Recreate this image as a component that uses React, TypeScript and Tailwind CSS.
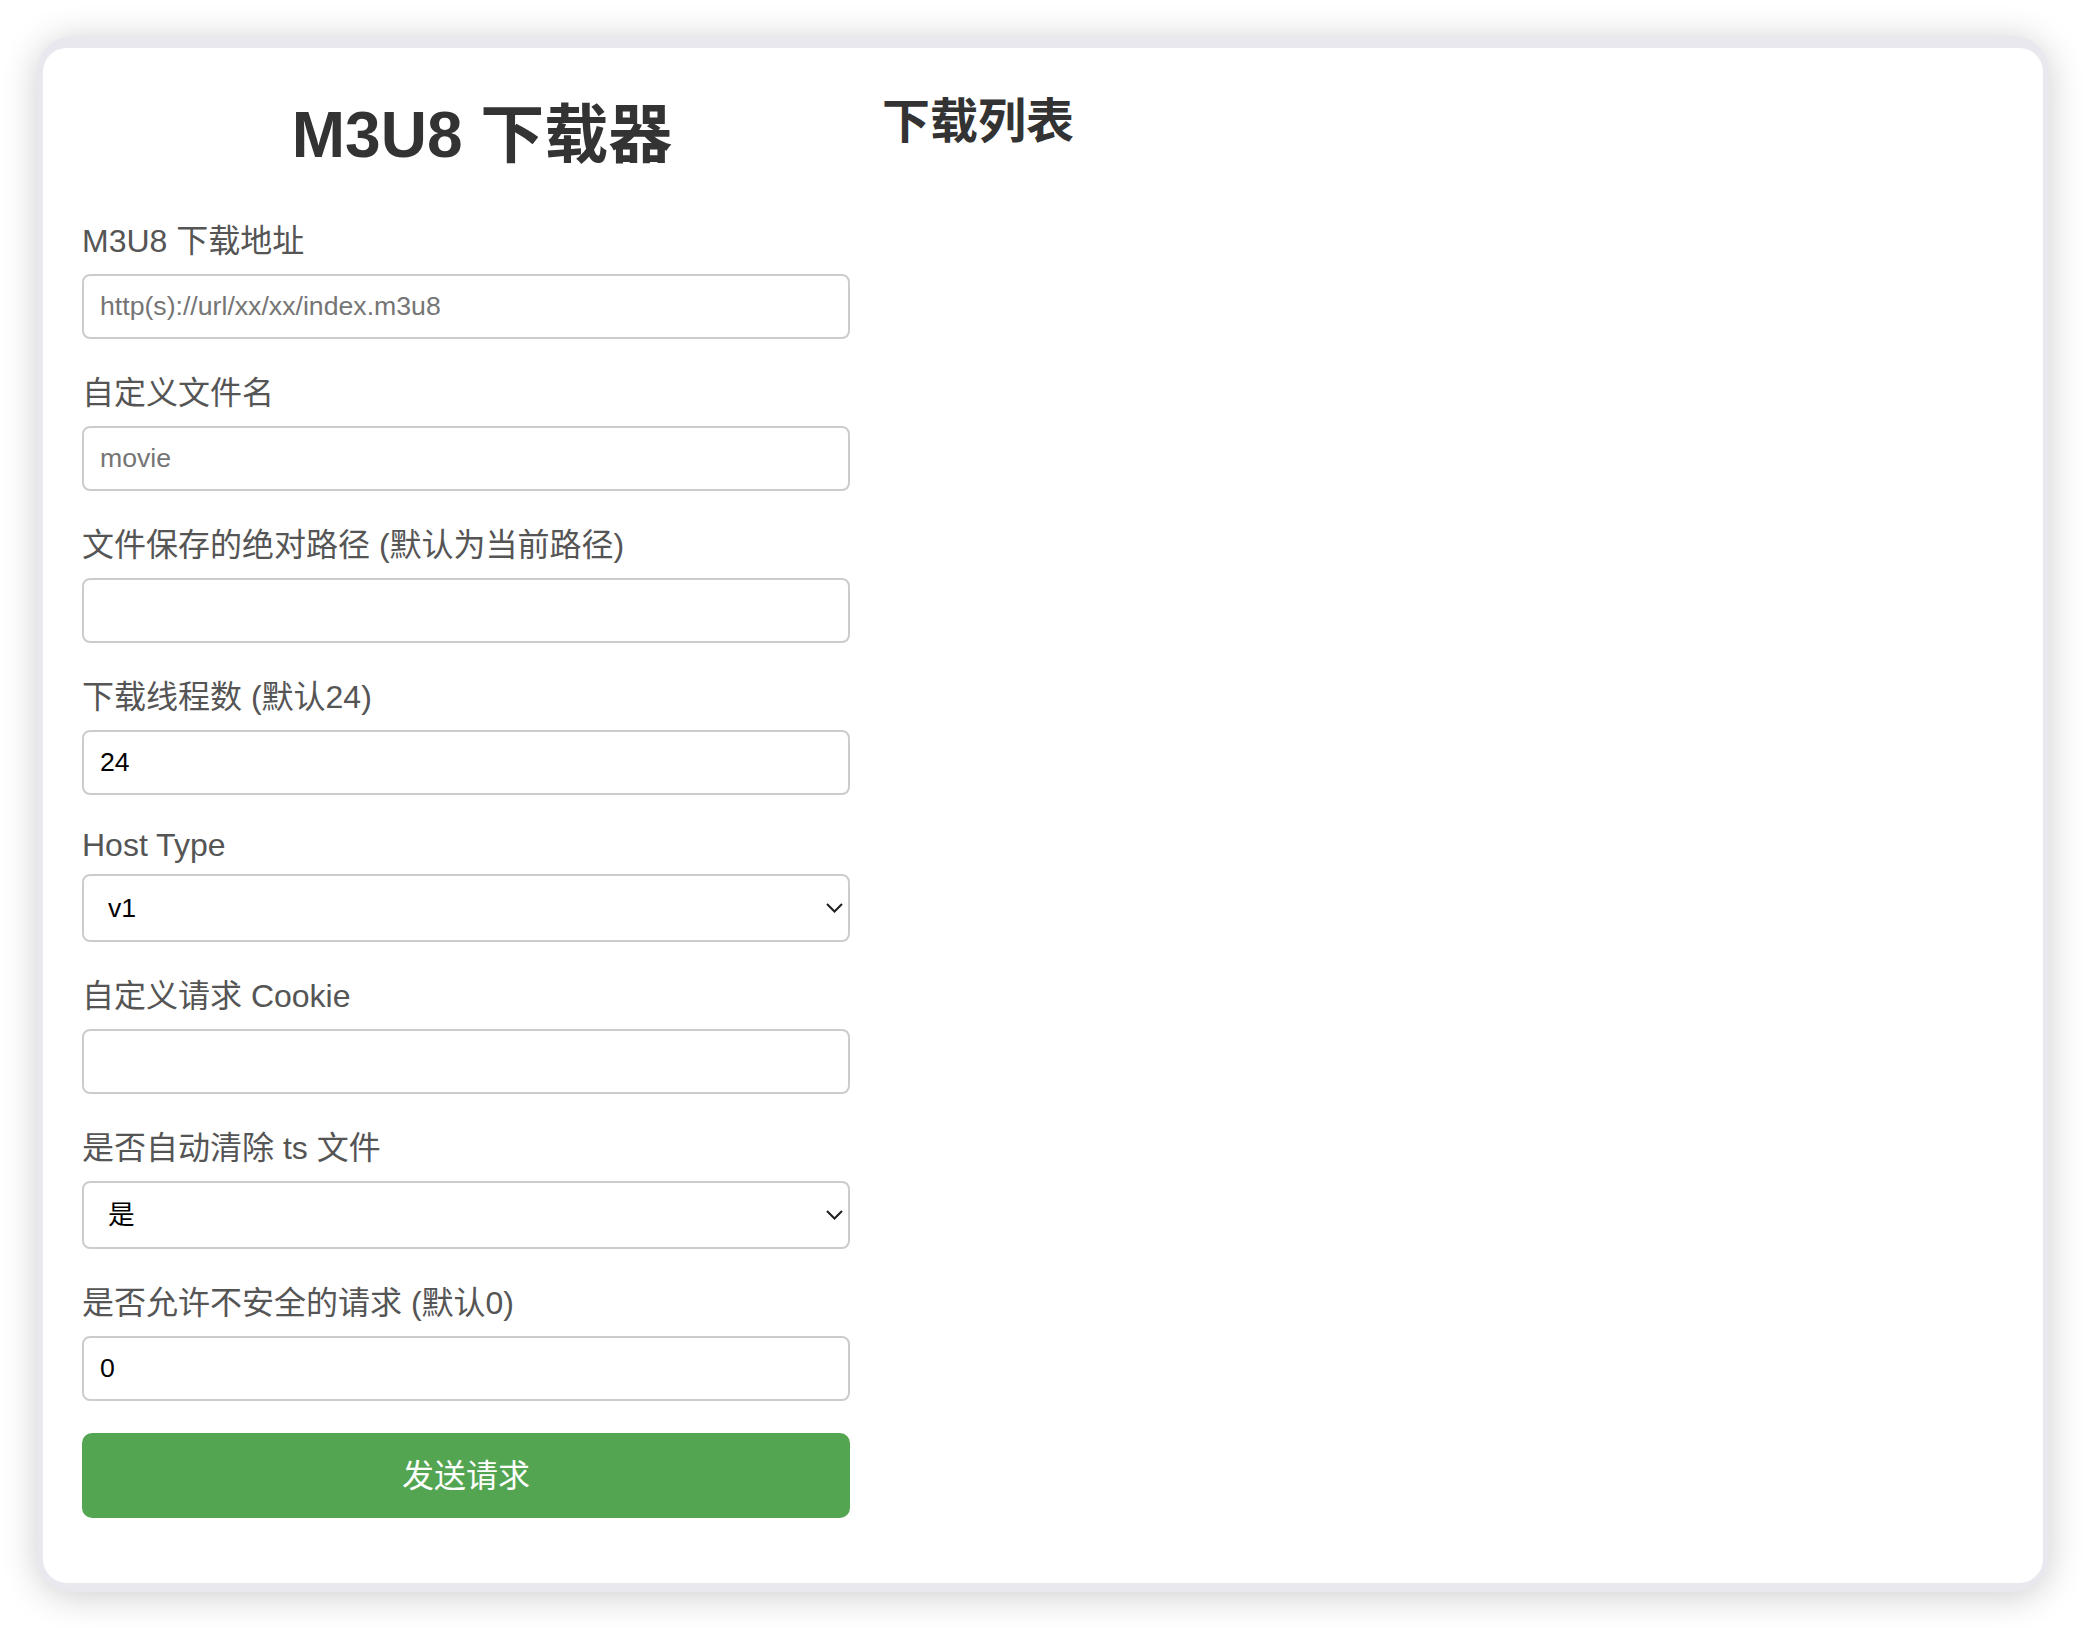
import React from "react";

const inputCls =
  "block h-[65px] w-full rounded-[8px] border-2 border-[#cccccc] bg-white px-[16px] text-[26.67px] text-black outline-none placeholder:text-[#757575]";

const selectCls =
  "block h-[68px] w-full appearance-none rounded-[8px] border-2 border-[#cccccc] bg-white pl-[24px] text-[26.67px] text-black outline-none";

const Label = ({ text, latin }: { text: string; latin?: boolean }) => (
  <label
    className={`mb-[10px] block text-[32px] text-[#555555] ${
      latin ? "leading-[37px]" : "leading-[45px]"
    }`}
  >
    {text}
  </label>
);

const Chevron = () => (
  <svg
    className="pointer-events-none absolute right-[7px] top-[29px]"
    width="17"
    height="10"
    viewBox="0 0 17 10"
    fill="none"
  >
    <polyline points="1,1 8.5,8.5 16,1" stroke="#1f1f1f" strokeWidth="2" />
  </svg>
);

const Select = ({ options }: { options: string[] }) => (
  <div className="relative">
    <select className={selectCls} defaultValue={options[0]}>
      {options.map((o) => (
        <option key={o}>{o}</option>
      ))}
    </select>
    <Chevron />
  </div>
);

const App = () => {
  return (
    <div className="h-[1628px] w-full bg-white px-[37px] py-[36px] font-[family-name:'Liberation_Sans','Noto_Sans_CJK_SC',sans-serif]">
      <div className="flex h-full flex-col rounded-[36px] bg-[#e9e8ee] px-[6px] pb-[9px] pt-[12px] shadow-[0_4px_36px_rgba(0,0,0,0.2)]">
        <div className="flex flex-1 items-start rounded-[24px] bg-white px-[39px]">
          {/* form */}
          <div className="w-[800px] shrink-0">
            <h1 className="mt-[47px] text-center text-[64px] font-bold leading-[80px] text-[#333333]">
              M3U8 下载器
            </h1>
            <div className="mt-[44px] w-[768px]">
              <div className="mb-[32px]">
                <Label text="M3U8 下载地址" />
                <input className={inputCls} placeholder="http(s)://url/xx/xx/index.m3u8" />
              </div>
              <div className="mb-[32px]">
                <Label text="自定义文件名" />
                <input className={inputCls} placeholder="movie" />
              </div>
              <div className="mb-[32px]">
                <Label text="文件保存的绝对路径 (默认为当前路径)" />
                <input className={inputCls} />
              </div>
              <div className="mb-[32px]">
                <Label text="下载线程数 (默认24)" />
                <input className={inputCls} defaultValue="24" />
              </div>
              <div className="mb-[32px]">
                <Label text="Host Type" latin />
                <Select options={["v1", "v2"]} />
              </div>
              <div className="mb-[32px]">
                <Label text="自定义请求 Cookie" />
                <input className={inputCls} />
              </div>
              <div className="mb-[32px]">
                <Label text="是否自动清除 ts 文件" />
                <Select options={["是", "否"]} />
              </div>
              <div className="mb-[32px]">
                <Label text="是否允许不安全的请求 (默认0)" />
                <input className={inputCls} defaultValue="0" />
              </div>
              <button className="block h-[85px] w-full rounded-[10px] bg-[#53a551] text-[32px] text-white">
                发送请求
              </button>
            </div>
          </div>

          {/* list */}
          <div className="flex-1">
            <h2 className="mt-[46px] text-[48px] font-bold leading-[56px] text-[#333333]">
              下载列表
            </h2>
          </div>
        </div>
      </div>
    </div>
  );
};

export default App;
